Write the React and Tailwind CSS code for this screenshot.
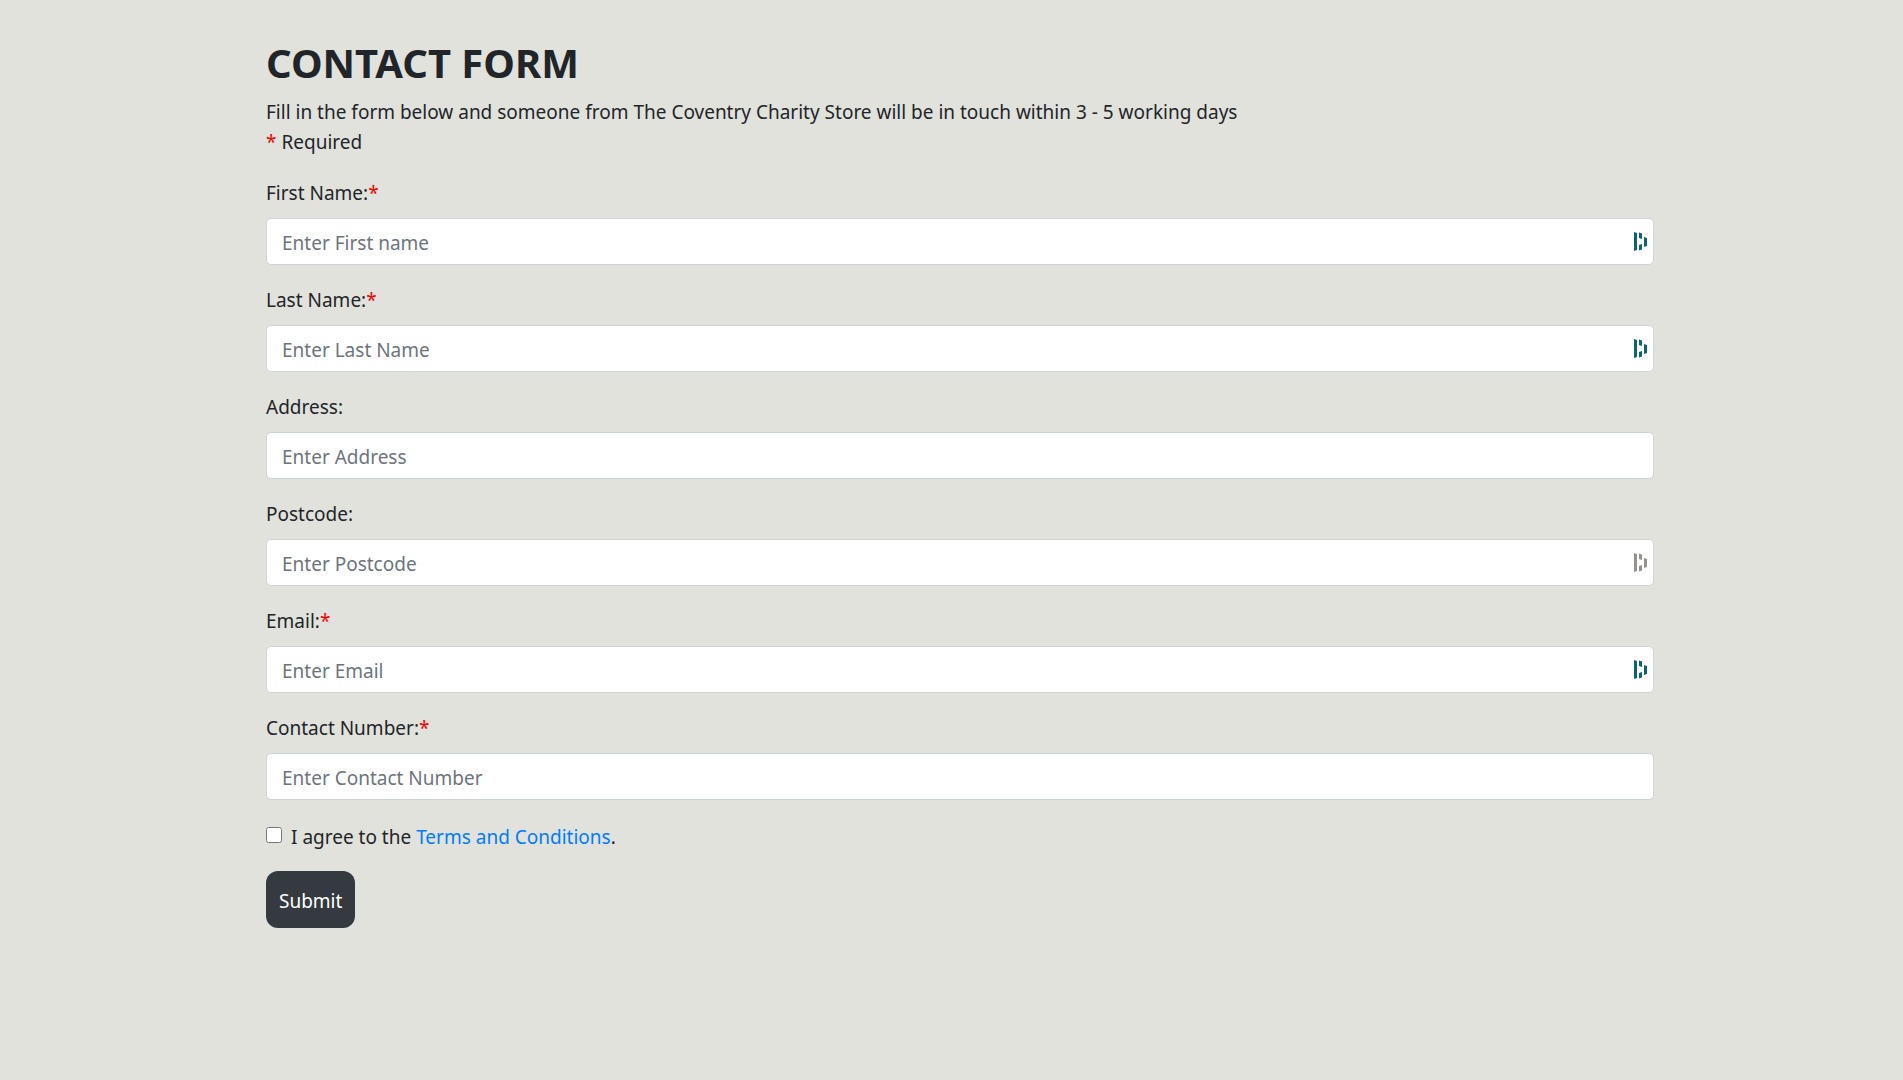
const fields = [
  { id: "first-name", label: "First Name:", placeholder: "Enter First name", required: true, mark: "text-[#0e6371]" },
  { id: "last-name", label: "Last Name:", placeholder: "Enter Last Name", required: true, mark: "text-[#0e6371]" },
  { id: "address", label: "Address:", placeholder: "Enter Address" },
  { id: "postcode", label: "Postcode:", placeholder: "Enter Postcode", mark: "text-[#96928f]" },
  { id: "email", label: "Email:", placeholder: "Enter Email", required: true, type: "email", mark: "text-[#0e6371]" },
  { id: "contact-number", label: "Contact Number:", placeholder: "Enter Contact Number", required: true, type: "tel" },
];

function AutofillMark({ className }) {
  return (
    <svg viewBox="0 0 13 19" className={`h-[19px] w-[13px] ${className}`} fill="currentColor" aria-hidden="true">
      <path d="M0 0 3 1v17L0 19zM5 .5l3 1V7L5 6zM5 13l3-1v5.500l-3 1zM10 5l3 1v8l-3 1z" />
    </svg>
  );
}

function Star() {
  return <span className="text-[#ff0000]">*</span>;
}

function Field({ id, label, placeholder, required, type = "text", mark }) {
  return (
    <div>
      <label htmlFor={id} className="mb-[10px] block">
        {label}
        {required && <Star />}
      </label>
      <div className="relative">
        <input
          id={id}
          name={id}
          type={type}
          placeholder={placeholder}
          className="block h-[47px] w-full rounded-[5px] border border-[#ced4da] bg-white px-[15px] pt-[2px] placeholder:text-[#6c757d] placeholder:opacity-100"
        />
        {mark && (
          <span className="pointer-events-none absolute inset-y-0 right-[7px] flex items-center">
            <AutofillMark className={mark} />
          </span>
        )}
      </div>
    </div>
  );
}

export default function App() {
  return (
    <main className="min-h-screen bg-[#e1e2dc] pt-[39px] pr-[249px] pb-10 pl-[266px] font-['Segoe_UI','Noto_Sans',sans-serif] text-[19px] leading-[30px] text-[#212529]">
      <h1 className="mb-[10px] text-[40px] leading-[48px] font-bold">CONTACT FORM</h1>
      <p>Fill in the form below and someone from The Coventry Charity Store will be in touch within 3 - 5 working days</p>
      <p>
        <Star /> Required
      </p>
      <form className="mt-[21px]" onSubmit={(e) => e.preventDefault()}>
        <div className="flex flex-col gap-5">
          {fields.map((f) => (
            <Field key={f.id} {...f} />
          ))}
        </div>
        <div className="mt-[22px] flex items-start gap-[9px]">
          <input id="terms" type="checkbox" className="mt-[5px] size-4" />
          <label htmlFor="terms">
            I agree to the{" "}
            <a href="#terms" className="text-[#007bff]">
              Terms and Conditions
            </a>
            .
          </label>
        </div>
        <button type="submit" className="mt-[19px] h-[57px] rounded-[12px] bg-[#343a40] px-[13px] pt-[2px] text-white">
          Submit
        </button>
      </form>
    </main>
  );
}
